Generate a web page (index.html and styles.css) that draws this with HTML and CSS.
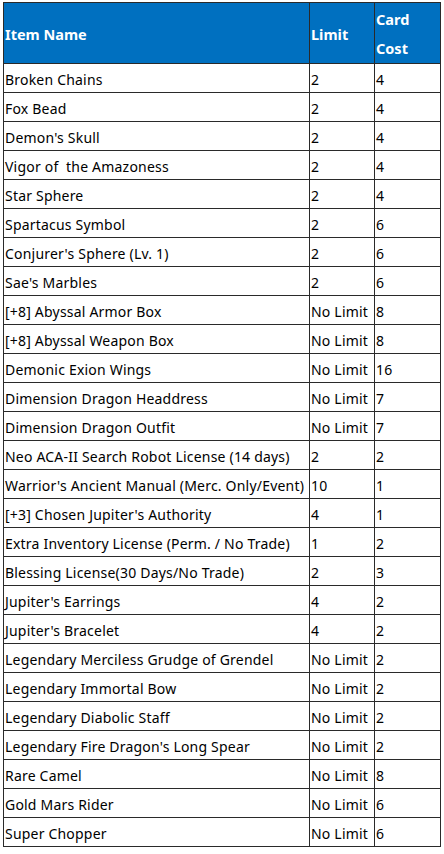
FILE: index.html
```html
<!DOCTYPE html>
<html>
<head>
<meta charset="utf-8">
<link rel="stylesheet" href="styles.css">
</head>
<body>
<table class="items">
  <colgroup>
    <col class="c-name">
    <col class="c-limit">
    <col class="c-cost">
  </colgroup>
  <thead>
    <tr><th>Item Name</th><th>Limit</th><th>Card<br>Cost</th></tr>
  </thead>
  <tbody>
    <tr><td>Broken Chains</td><td>2</td><td>4</td></tr>
    <tr><td>Fox Bead</td><td>2</td><td>4</td></tr>
    <tr><td>Demon's Skull</td><td>2</td><td>4</td></tr>
    <tr><td>Vigor of&nbsp; the Amazoness</td><td>2</td><td>4</td></tr>
    <tr><td>Star Sphere</td><td>2</td><td>4</td></tr>
    <tr><td>Spartacus Symbol</td><td>2</td><td>6</td></tr>
    <tr><td>Conjurer's Sphere (Lv. 1)</td><td>2</td><td>6</td></tr>
    <tr><td>Sae's Marbles</td><td>2</td><td>6</td></tr>
    <tr><td>[+8] Abyssal Armor Box</td><td>No Limit</td><td>8</td></tr>
    <tr><td>[+8] Abyssal Weapon Box</td><td>No Limit</td><td>8</td></tr>
    <tr><td>Demonic Exion Wings</td><td>No Limit</td><td>16</td></tr>
    <tr><td>Dimension Dragon Headdress</td><td>No Limit</td><td>7</td></tr>
    <tr><td>Dimension Dragon Outfit</td><td>No Limit</td><td>7</td></tr>
    <tr><td>Neo ACA-II Search Robot License (14 days)</td><td>2</td><td>2</td></tr>
    <tr><td>Warrior's Ancient Manual (Merc. Only/Event)</td><td>10</td><td>1</td></tr>
    <tr><td>[+3] Chosen Jupiter's Authority</td><td>4</td><td>1</td></tr>
    <tr><td>Extra Inventory License (Perm. / No Trade)</td><td>1</td><td>2</td></tr>
    <tr><td>Blessing License(30 Days/No Trade)</td><td>2</td><td>3</td></tr>
    <tr><td>Jupiter's Earrings</td><td>4</td><td>2</td></tr>
    <tr><td>Jupiter's Bracelet</td><td>4</td><td>2</td></tr>
    <tr><td>Legendary Merciless Grudge of Grendel</td><td>No Limit</td><td>2</td></tr>
    <tr><td>Legendary Immortal Bow</td><td>No Limit</td><td>2</td></tr>
    <tr><td>Legendary Diabolic Staff</td><td>No Limit</td><td>2</td></tr>
    <tr><td>Legendary Fire Dragon's Long Spear</td><td>No Limit</td><td>2</td></tr>
    <tr><td>Rare Camel</td><td>No Limit</td><td>8</td></tr>
    <tr><td>Gold Mars Rider</td><td>No Limit</td><td>6</td></tr>
    <tr><td>Super Chopper</td><td>No Limit</td><td>6</td></tr>
  </tbody>
</table>
</body>
</html>
```
FILE: styles.css
```css
html, body {
  margin: 0;
  padding: 0;
  background: #ffffff;
}
body {
  padding: 2px 0 0 3px;
  font-family: "Noto Sans", "Open Sans", sans-serif;
  font-size: 14px;
  letter-spacing: 0.2px;
  color: #000000;
}
.items {
  border-collapse: collapse;
  table-layout: fixed;
  width: 437px;
  border: 1px solid #2a2a2a;
}
.c-name { width: 306px; }
.c-limit { width: 65px; }
.c-cost { width: 66px; }
.items th,
.items td {
  border: 1px solid #2a2a2a;
  padding: 3px 1px 0 1px;
  line-height: 25px;
  text-align: left;
  vertical-align: middle;
  white-space: nowrap;
  overflow: hidden;
}
.items th {
  background: #0070c0;
  color: #ffffff;
  font-weight: 700;
  font-size: 14.5px;
  line-height: 29px;
  padding: 2px 1px 0 1px;
  letter-spacing: 0;
}
```
